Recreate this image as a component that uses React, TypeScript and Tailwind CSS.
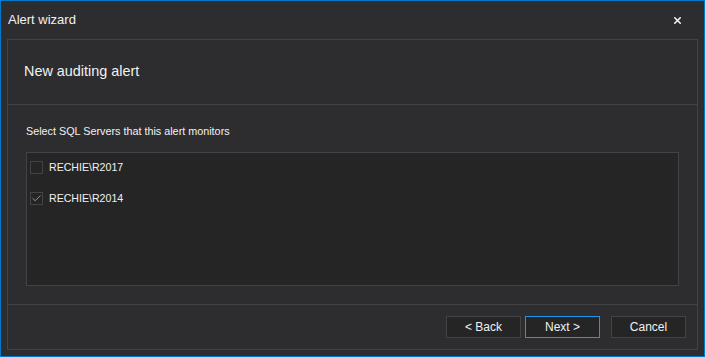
import { Check, X } from 'lucide-react';

const servers = [
  { name: 'RECHIE\\R2017', checked: false },
  { name: 'RECHIE\\R2014', checked: true },
];

function WizardButton({ label, primary }: { label: string; primary?: boolean }) {
  return (
    <button
      className={`h-[22px] w-[75px] border bg-[#252526] text-[12px] text-[#f1f1f1] ${
        primary ? 'border-[#1c97ea]' : 'border-[#434346]'
      }`}
    >
      {label}
    </button>
  );
}

export default function App() {
  return (
    <div
      className="flex h-[357px] w-[705px] flex-col border border-[#007acc] bg-[#2d2d30] text-[#f1f1f1]"
      style={{ fontFamily: '"Liberation Sans", Arial, sans-serif' }}
    >
      {/* title bar */}
      <div className="flex h-[38px] items-center justify-between pl-[7px] pr-[21px]">
        <span className="text-[13px]">Alert wizard</span>
        <X size={11} strokeWidth={3.5} className="text-[#f1f1f1]" />
      </div>

      {/* wizard body */}
      <div className="mx-[6px] mb-[6px] flex flex-1 flex-col border border-[#434346]">
        <div className="flex h-[65px] items-center border-b border-[#434346] pl-[16px] text-[14.4px]">
          New auditing alert
        </div>

        <div className="flex flex-1 flex-col px-[18px] pt-[19px] pb-[18px]">
          <div className="text-[10.8px] leading-[14px]">Select SQL Servers that this alert monitors</div>
          <div className="mt-[14px] flex flex-1 flex-col gap-[15px] border border-[#434346] bg-[#252526] pl-[3px] pt-[7px]">
            {servers.map(s => (
              <div key={s.name} className="flex items-center gap-[6px]">
                <span className="flex h-[13px] w-[13px] items-center justify-center border border-[#434346] bg-[#252526]">
                  {s.checked && <Check size={11} strokeWidth={2} className="text-[#a0a0a0]" />}
                </span>
                <span className="text-[10.6px]">{s.name}</span>
              </div>
            ))}
          </div>
        </div>

        <div className="flex h-[45px] items-center justify-end gap-[4px] border-t border-[#434346] pr-[11px]">
          <WizardButton label="< Back" />
          <WizardButton label="Next >" primary />
          <div className="w-[3px]" />
          <WizardButton label="Cancel" />
        </div>
      </div>
    </div>
  );
}
